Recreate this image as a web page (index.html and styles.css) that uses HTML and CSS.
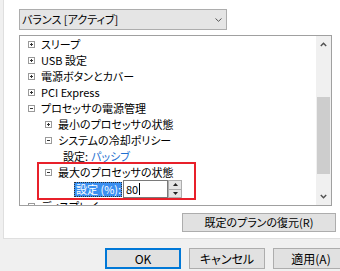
FILE: index.html
```html
<!DOCTYPE html>
<html lang="ja">
<head>
<meta charset="utf-8">
<link rel="stylesheet" href="styles.css">
</head>
<body>
<div class="panel">
  <div class="combo">
    <span class="combo-text">バランス [アクティブ]</span>
    <svg class="combo-arrow" width="7" height="4" viewBox="0 0 7 4"><path d="M0.5 0.5 L3.5 3.3 L6.5 0.5" fill="none" stroke="#555" stroke-width="1"/></svg>
  </div>
  <div class="tree">
    <div class="tree-list">
      <div class="row l1"><svg class="exp" width="7" height="7" viewBox="0 0 7 7"><rect x="0.5" y="0.5" width="6" height="6" fill="#fff" stroke="#9a9a9a"/><path d="M2 3.5H5M3.5 2V5" stroke="#333"/></svg><span>スリープ</span></div>
      <div class="row l1"><svg class="exp" width="7" height="7" viewBox="0 0 7 7"><rect x="0.5" y="0.5" width="6" height="6" fill="#fff" stroke="#9a9a9a"/><path d="M2 3.5H5M3.5 2V5" stroke="#333"/></svg><span>USB 設定</span></div>
      <div class="row l1"><svg class="exp" width="7" height="7" viewBox="0 0 7 7"><rect x="0.5" y="0.5" width="6" height="6" fill="#fff" stroke="#9a9a9a"/><path d="M2 3.5H5M3.5 2V5" stroke="#333"/></svg><span>電源ボタンとカバー</span></div>
      <div class="row l1"><svg class="exp" width="7" height="7" viewBox="0 0 7 7"><rect x="0.5" y="0.5" width="6" height="6" fill="#fff" stroke="#9a9a9a"/><path d="M2 3.5H5M3.5 2V5" stroke="#333"/></svg><span>PCI Express</span></div>
      <div class="row l1"><svg class="exp" width="7" height="7" viewBox="0 0 7 7"><rect x="0.5" y="0.5" width="6" height="6" fill="#fff" stroke="#9a9a9a"/><path d="M2 3.5H5" stroke="#333"/></svg><span>プロセッサの電源管理</span></div>
      <div class="row l2"><svg class="exp" width="7" height="7" viewBox="0 0 7 7"><rect x="0.5" y="0.5" width="6" height="6" fill="#fff" stroke="#9a9a9a"/><path d="M2 3.5H5M3.5 2V5" stroke="#333"/></svg><span>最小のプロセッサの状態</span></div>
      <div class="row l2"><svg class="exp" width="7" height="7" viewBox="0 0 7 7"><rect x="0.5" y="0.5" width="6" height="6" fill="#fff" stroke="#9a9a9a"/><path d="M2 3.5H5" stroke="#333"/></svg><span>システムの冷却ポリシー</span></div>
      <div class="row l3"><span>設定: </span><span class="link">パッシブ</span></div>
      <div class="row l2"><svg class="exp" width="7" height="7" viewBox="0 0 7 7"><rect x="0.5" y="0.5" width="6" height="6" fill="#fff" stroke="#9a9a9a"/><path d="M2 3.5H5" stroke="#333"/></svg><span>最大のプロセッサの状態</span></div>
      <div class="row spin-row">
        <span class="sel">設定 (%):</span>
        <div class="spin">
          <div class="spin-input"><span>80</span><span class="caret"></span></div>
          <div class="spin-btns">
            <div class="spin-btn"><svg width="5" height="3" viewBox="0 0 5 3"><path d="M0 3L2.5 0L5 3Z" fill="#222"/></svg></div>
            <div class="spin-btn"><svg width="5" height="3" viewBox="0 0 5 3"><path d="M0 0L2.5 3L5 0Z" fill="#222"/></svg></div>
          </div>
        </div>
      </div>
      <div class="row l1"><svg class="exp" width="7" height="7" viewBox="0 0 7 7"><rect x="0.5" y="0.5" width="6" height="6" fill="#fff" stroke="#9a9a9a"/><path d="M2 3.5H5M3.5 2V5" stroke="#333"/></svg><span>ディスプレイ</span></div>
      <div class="redbox"></div>
    </div>
    <div class="scrollbar">
      <div class="sb-btn"><svg width="7" height="5" viewBox="0 0 7 5"><path d="M0.8 4L3.5 1.2L6.2 4" fill="none" stroke="#505050" stroke-width="1.4"/></svg></div>
      <div class="sb-track"><div class="sb-thumb"></div></div>
      <div class="sb-btn"><svg width="7" height="5" viewBox="0 0 7 5"><path d="M0.8 1L3.5 3.8L6.2 1" fill="none" stroke="#505050" stroke-width="1.4"/></svg></div>
    </div>
  </div>
  <div class="restore-row">
    <div class="btn restore">既定のプランの復元(R)</div>
  </div>
</div>
<div class="footer">
  <div class="btn dlg default">OK</div>
  <div class="btn dlg">キャンセル</div>
  <div class="btn dlg">適用(A)</div>
</div>
</body>
</html>
```
FILE: styles.css
```css
html, body {
  margin: 0;
  padding: 0;
}
body {
  width: 340px;
  height: 271px;
  overflow: hidden;
  background: #f0f0f0;
  font-family: "Noto Sans CJK JP", "Noto Sans", sans-serif;
  font-feature-settings: "palt";
  font-size: 11px;
  color: #000;
}
.panel {
  margin-left: 3px;
  width: 337px;
  height: 239px;
  box-sizing: border-box;
  background: #fff;
  border-left: 1px solid #dfdfdf;
  border-bottom: 1px solid #dfdfdf;
  padding-top: 9px;
}
.combo {
  margin-left: 15px;
  width: 208px;
  height: 21px;
  box-sizing: border-box;
  background: #e5e5e5;
  border: 1px solid #adadad;
  display: flex;
  align-items: center;
  justify-content: space-between;
  padding: 0 4px 0 2px;
}
.combo-text {
  line-height: 1;
}
.tree {
  margin-top: 5px;
  margin-left: 15px;
  width: 313px;
  height: 171px;
  box-sizing: border-box;
  border: 1px solid #a0a0a0;
  display: flex;
}
.tree-list {
  flex: 1;
  position: relative;
  overflow: hidden;
}
.row {
  height: 16px;
  display: flex;
  align-items: center;
  white-space: nowrap;
  line-height: 1;
}
.exp {
  flex-shrink: 0;
  margin-right: 6px;
}
.l1 { padding-left: 8px; }
.l2 { padding-left: 25px; }
.l3 { padding-left: 43px; }
.link { color: #1e6fd0; margin-left: 3px; }
.spin-row {
  height: 18px;
  padding-left: 54px;
}
.sel {
  background: #3a8ff0;
  color: #fff;
  height: 15px;
  display: flex;
  align-items: center;
  padding: 0 2px;
  box-sizing: border-box;
  outline: 1px dotted #333;
  outline-offset: -1px;
  width: 48px;
}
.spin {
  display: flex;
  height: 18px;
  margin-left: 1px;
}
.spin-input {
  width: 45px;
  height: 18px;
  box-sizing: border-box;
  border: 1px solid #7a7a7a;
  display: flex;
  align-items: center;
  padding-left: 2px;
}
.caret {
  width: 1px;
  height: 12px;
  background: #000;
  margin-left: 1px;
}
.spin-btns {
  display: flex;
  flex-direction: column;
  width: 14px;
  height: 18px;
}
.spin-btn {
  flex: 1;
  box-sizing: border-box;
  border: 1px solid #adadad;
  background: #e5e5e5;
  display: flex;
  align-items: center;
  justify-content: center;
}
.spin-btn + .spin-btn { border-top: none; }
.redbox {
  position: absolute;
  left: 17px;
  top: 126px;
  width: 159px;
  height: 38px;
  box-sizing: border-box;
  border: 2px solid #e8202a;
}
.scrollbar {
  width: 15px;
  background: #f0f0f0;
  display: flex;
  flex-direction: column;
}
.sb-btn {
  height: 17px;
  display: flex;
  align-items: center;
  justify-content: center;
}
.sb-track {
  flex: 1;
  padding-top: 44px;
}
.sb-thumb {
  margin: 0 1px;
  height: 77px;
  background: #cdcdcd;
}
.restore-row {
  display: flex;
  justify-content: flex-end;
  margin-top: 7px;
  padding-right: 4px;
}
.btn {
  box-sizing: border-box;
  background: #e1e1e1;
  border: 1px solid #adadad;
  display: flex;
  align-items: center;
  justify-content: center;
  line-height: 1;
  flex-shrink: 0;
}
.restore {
  width: 154px;
  height: 19px;
}
.footer {
  display: flex;
  gap: 8px;
  padding-left: 105px;
  margin-top: 9px;
}
.dlg {
  width: 76px;
  height: 21px;
  font-size: 12px;
}
.default {
  border: 2px solid #0078d7;
}
```
